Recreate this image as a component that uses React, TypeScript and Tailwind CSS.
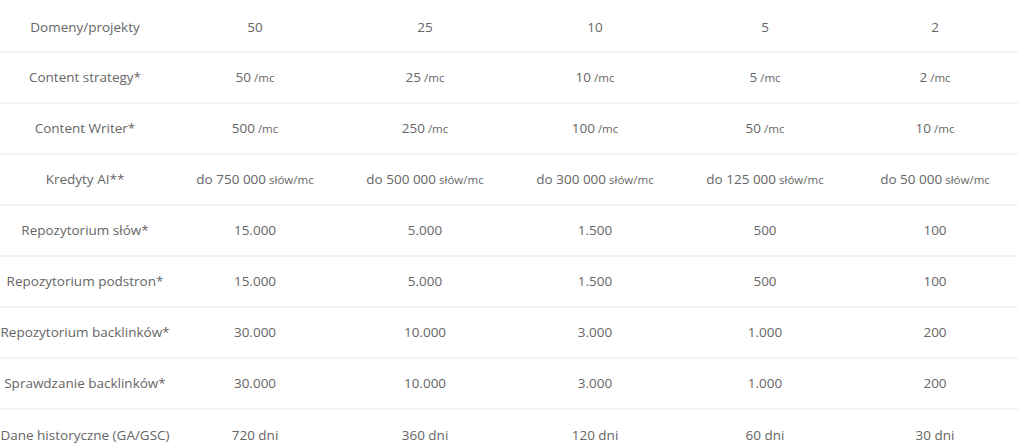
import React from "react";

type Cell = { v: string; s?: string };

const rows: { label: string; cells: Cell[] }[] = [
  { label: "Domeny/projekty", cells: [{ v: "50" }, { v: "25" }, { v: "10" }, { v: "5" }, { v: "2" }] },
  { label: "Content strategy*", cells: [{ v: "50", s: "/mc" }, { v: "25", s: "/mc" }, { v: "10", s: "/mc" }, { v: "5", s: "/mc" }, { v: "2", s: "/mc" }] },
  { label: "Content Writer*", cells: [{ v: "500", s: "/mc" }, { v: "250", s: "/mc" }, { v: "100", s: "/mc" }, { v: "50", s: "/mc" }, { v: "10", s: "/mc" }] },
  { label: "Kredyty AI**", cells: [{ v: "do 750 000", s: "słów/mc" }, { v: "do 500 000", s: "słów/mc" }, { v: "do 300 000", s: "słów/mc" }, { v: "do 125 000", s: "słów/mc" }, { v: "do 50 000", s: "słów/mc" }] },
  { label: "Repozytorium słów*", cells: [{ v: "15.000" }, { v: "5.000" }, { v: "1.500" }, { v: "500" }, { v: "100" }] },
  { label: "Repozytorium podstron*", cells: [{ v: "15.000" }, { v: "5.000" }, { v: "1.500" }, { v: "500" }, { v: "100" }] },
  { label: "Repozytorium backlinków*", cells: [{ v: "30.000" }, { v: "10.000" }, { v: "3.000" }, { v: "1.000" }, { v: "200" }] },
  { label: "Sprawdzanie backlinków*", cells: [{ v: "30.000" }, { v: "10.000" }, { v: "3.000" }, { v: "1.000" }, { v: "200" }] },
  { label: "Dane historyczne (GA/GSC)", cells: [{ v: "720 dni" }, { v: "360 dni" }, { v: "120 dni" }, { v: "60 dni" }, { v: "30 dni" }] },
];

export default function App() {
  return (
    <div
      className="w-[1024px] h-[443px] overflow-hidden bg-white text-[#666666] text-[13.5px]"
      style={{ fontFamily: '"Open Sans", "Noto Sans", sans-serif' }}
    >
      <div className="w-[1018px] flex flex-col">
        {rows.map((r, i) => (
          <div
            key={r.label}
            className={`flex shrink-0 ${i === 0 ? "h-[53px] pt-[3px]" : "h-[51px]"} ${
              i < rows.length - 1 ? "border-b-2 border-[#f2f2f2]" : ""
            }`}
          >
            <div className="w-[170px] shrink-0 flex items-center justify-center whitespace-nowrap">
              {r.label}
            </div>
            {r.cells.map((c, j) => (
              <div
                key={j}
                className="w-[170px] shrink-0 flex items-center justify-center whitespace-nowrap"
              >
                <span>
                  {c.v}
                  {c.s && <span className="text-[11.5px]"> {c.s}</span>}
                </span>
              </div>
            ))}
          </div>
        ))}
      </div>
    </div>
  );
}
